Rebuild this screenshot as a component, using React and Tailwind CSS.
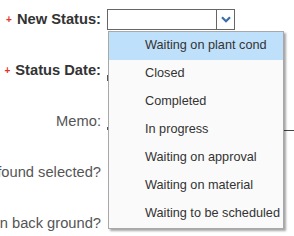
import { useState } from 'react';

const options = [
  'Waiting on plant cond',
  'Closed',
  'Completed',
  'In progress',
  'Waiting on approval',
  'Waiting on material',
  'Waiting to be scheduled',
];

const Req = () => <span className="text-[#e0322b] text-[10px] font-bold mr-[5px] leading-none">+</span>;

const Label = ({ children, bold, req }) => (
  <div className="w-[101px] shrink-0 flex justify-end items-center whitespace-nowrap">
    {req && <Req />}
    <span className={bold ? 'text-[14.7px] font-bold text-[#333]' : 'text-[14.7px] text-[#555]'}>{children}</span>
  </div>
);

const App = () => {
  const [selected, setSelected] = useState(0);

  return (
    <div className="relative w-[294px] h-[236px] overflow-hidden bg-white" style={{ fontFamily: '"Liberation Sans", Arial, sans-serif' }}>
      <div className="flex flex-col gap-[30px] pt-[9px]">
        <div className="h-[21px] flex items-center">
          <Label bold req>New Status:</Label>
          <div className="ml-[6px] w-[128px] h-[21px] flex border border-[#666] bg-white">
            <div className="flex-1" />
            <div className="w-[18px] border-l border-[#666] flex items-center justify-center">
              <svg width="10" height="7" viewBox="0 0 10 7">
                <path d="M1 1.2 L5 5.2 L9 1.2" fill="none" stroke="#3b6ea8" strokeWidth="2.2" />
              </svg>
            </div>
          </div>
        </div>

        <div className="h-[21px] flex items-center">
          <Label bold req>Status Date:</Label>
          <div className="ml-[6px] w-[1px] h-[6px] mt-[14px] bg-[#555]" />
        </div>

        <div className="h-[21px] flex items-center">
          <Label>Memo:</Label>
          <div className="ml-[6px] w-[1px] h-[3px] mt-[14px] bg-[#555]" />
          <div className="ml-auto w-[11px] h-[1px] mt-[18px] bg-[#444]" />
        </div>

        <div className="h-[21px] flex items-center">
          <Label>Work order found selected?</Label>
        </div>

        <div className="h-[21px] flex items-center">
          <Label>Run in back ground?</Label>
        </div>
      </div>

      <ul className="absolute left-[108px] top-[31px] w-[176px] border border-[#a8a8a8] bg-[#fafafa] shadow-[2px_2px_2px_rgba(0,0,0,0.35)]">
        {options.map((o, i) => (
          <li
            key={o}
            onMouseEnter={() => setSelected(i)}
            className={`h-[28px] flex items-center pl-[36px] text-[12.7px] text-[#333] whitespace-nowrap ${i === selected ? 'bg-[#bfe0fb]' : ''}`}
          >
            {o}
          </li>
        ))}
      </ul>
    </div>
  );
};

export default App;
